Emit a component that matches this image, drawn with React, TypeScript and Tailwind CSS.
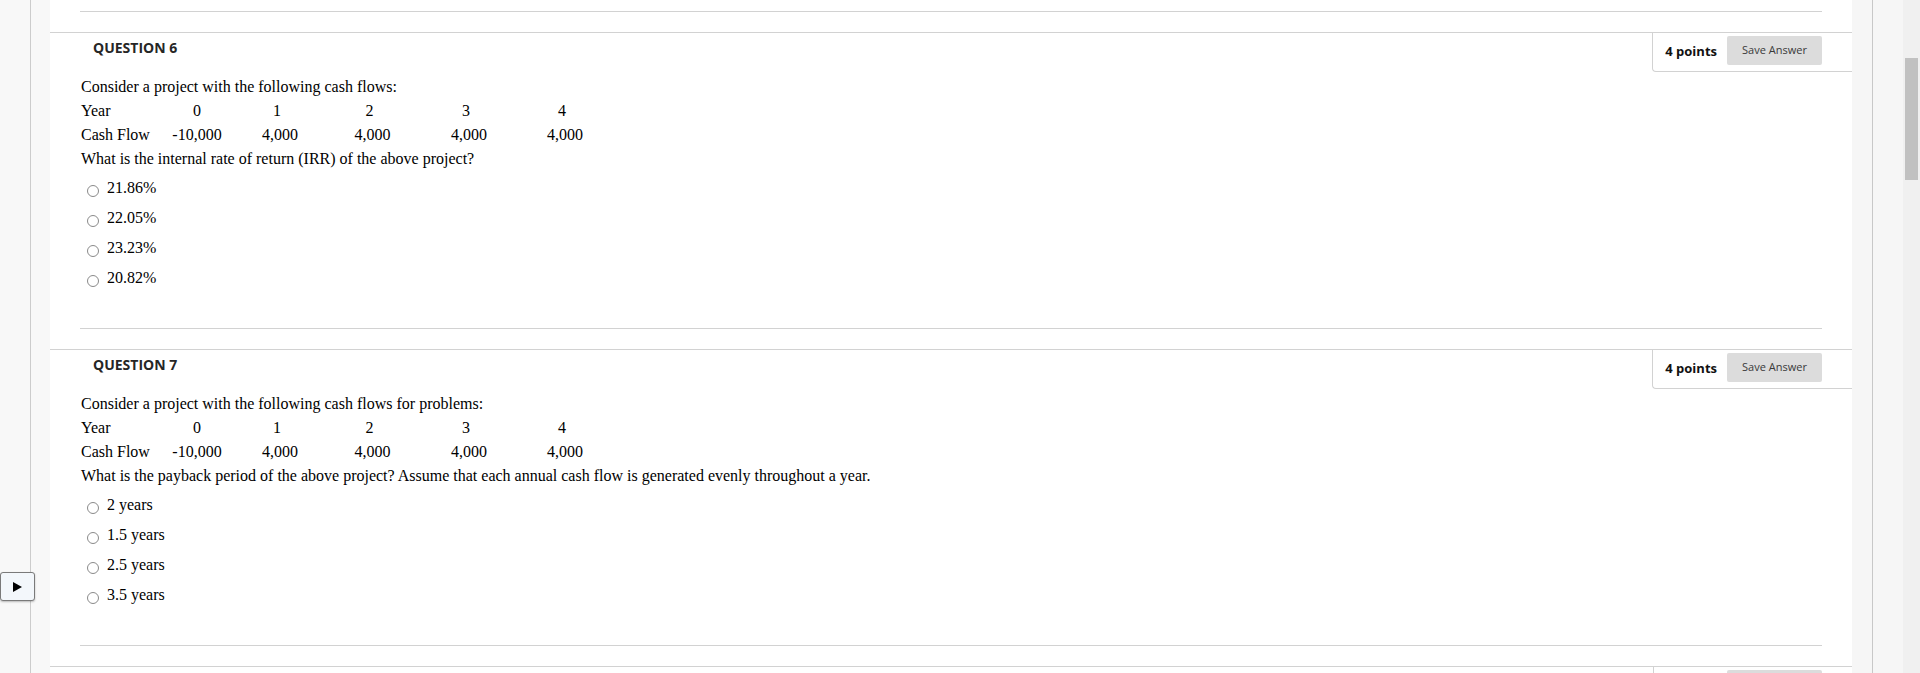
import React from "react";

type Question = {
    num: number;
    points: number;
    intro: string;
    ask: string;
    options: string[];
};

const questions: Question[] = [
    {
        num: 6,
        points: 4,
        intro: "Consider a project with the following cash flows:",
        ask: "What is the internal rate of return (IRR) of the above project?",
        options: ["21.86%", "22.05%", "23.23%", "20.82%"],
    },
    {
        num: 7,
        points: 4,
        intro: "Consider a project with the following cash flows for problems:",
        ask: "What is the payback period of the above project? Assume that each annual cash flow is generated evenly throughout a year.",
        options: ["2 years", "1.5 years", "2.5 years", "3.5 years"],
    },
];

/* ─── Cash flow table ──────────────────────────────────────────── */

const CashFlowTable: React.FC = () => (
    <table className="border-collapse">
        <tbody>
            <tr className="h-[24px]">
                <td className="w-[77px] p-0 text-left">Year</td>
                <td className="w-[78px] p-0 text-center">0</td>
                <td className="w-[88px] p-0 pr-[6px] text-center">1</td>
                <td className="w-[97px] p-0 pr-[6px] text-center">2</td>
                <td className="w-[96px] p-0 pr-[6px] text-center">3</td>
                <td className="w-[96px] p-0 pr-[6px] text-center">4</td>
            </tr>
            <tr className="h-[24px]">
                <td className="p-0 text-left">Cash Flow</td>
                <td className="p-0 text-center">-10,000</td>
                <td className="p-0 text-center">4,000</td>
                <td className="p-0 text-center">4,000</td>
                <td className="p-0 text-center">4,000</td>
                <td className="p-0 text-center">4,000</td>
            </tr>
        </tbody>
    </table>
);

/* ─── Header with points box ───────────────────────────────────── */

const QuestionHeader: React.FC<{ num: number; points: number }> = ({ num, points }) => (
    <div className="flex justify-between items-start font-['Open_Sans',sans-serif]">
        <h2 className="pl-[43px] pt-[5px] text-[14px] leading-[20px] font-bold text-[#262626]">
            QUESTION {num}
        </h2>
        <div className="flex items-center border-l border-b border-[#d2d2d2] rounded-bl-[4px] pl-[12px] pr-[30px] pt-[3px] pb-[6px]">
            <span className="text-[13px] leading-[18px] font-bold text-[#111]">{points} points</span>
            <button className="ml-[10px] w-[95px] h-[29px] rounded-[2px] bg-[#dcdcdc] text-[11px] text-[#3a3a3a]">
                Save Answer
            </button>
        </div>
    </div>
);

/* ─── Question block ───────────────────────────────────────────── */

const QuestionBlock: React.FC<{ q: Question }> = ({ q }) => (
    <section>
        <div className="mx-[30px] h-px bg-[#d2d2d2]" />
        <div className="mt-[20px] border-t border-[#d2d2d2]">
            <QuestionHeader num={q.num} points={q.points} />
            <div className="pl-[31px] pt-[3px] pb-[35px] font-['Liberation_Serif',serif] text-[16px] leading-[24px] text-black">
                <p>{q.intro}</p>
                <CashFlowTable />
                <p>{q.ask}</p>
                <ul className="mt-[2px]">
                    {q.options.map((opt) => (
                        <li key={opt} className="flex items-start h-[30px]">
                            <span className="ml-[6px] mt-[12px] w-[12px] h-[12px] rounded-full border border-[#8a8a8a] bg-white shrink-0" />
                            <span className="ml-[8px] leading-[30px]">{opt}</span>
                        </li>
                    ))}
                </ul>
            </div>
        </div>
    </section>
);

/* ─── Page ─────────────────────────────────────────────────────── */

export default function App() {
    return (
        <div className="relative flex w-[1920px] h-[673px] overflow-hidden bg-white">
            {/* Left rail */}
            <aside className="flex w-[50px] shrink-0 bg-[#f8f8f8]">
                <div className="w-[30px]" />
                <div className="w-px bg-[#cccccc]" />
            </aside>

            {/* Questions */}
            <main className="w-[1802px] shrink-0 bg-white pt-[11px]">
                {questions.map((q) => (
                    <QuestionBlock key={q.num} q={q} />
                ))}
                {/* next question, only its top edge is in view */}
                <section>
                    <div className="mx-[30px] h-px bg-[#d2d2d2]" />
                    <div className="mt-[20px] border-t border-[#d2d2d2] flex justify-end">
                        <div className="flex border-l border-[#d2d2d2] pl-[73px] pr-[30px] pt-[3px] h-[40px]">
                            <div className="w-[95px] h-[29px] rounded-[2px] bg-[#dcdcdc]" />
                        </div>
                    </div>
                </section>
            </main>

            {/* Right rail + scrollbar */}
            <div className="w-[20px] shrink-0 bg-[#f6f6f6]" />
            <div className="w-px shrink-0 bg-[#c8c8c8]" />
            <div className="w-[30px] shrink-0 bg-[#f6f6f6]" />
            <div className="w-[17px] shrink-0 bg-[#f0f0f0]">
                <div className="mt-[58px] mx-[2px] h-[122px] bg-[#c1c1c1]" />
            </div>

            {/* Floating toggle */}
            <button
                className="absolute left-0 top-[572px] flex items-center justify-center w-[35px] h-[29px] rounded-[3px] border border-[#7a7a7a] bg-[#f3f7fb] shadow-[0_1px_2px_rgba(0,0,0,0.25)]"
                aria-label="Expand"
            >
                <svg width="9" height="10" viewBox="0 0 9 10">
                    <polygon points="0,0 9,5 0,10" fill="#000" />
                </svg>
            </button>
        </div>
    );
}
